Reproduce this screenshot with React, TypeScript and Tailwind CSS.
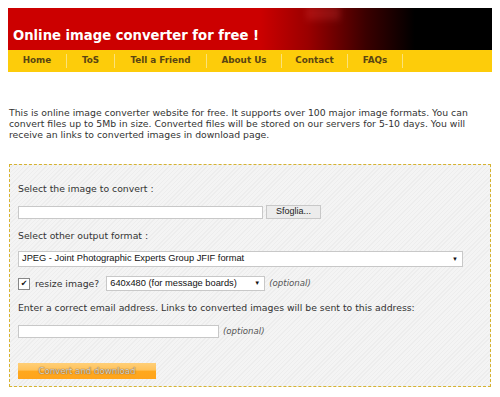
const navItems = ["Home", "ToS", "Tell a Friend", "About Us", "Contact", "FAQs"];

const navWidths = ["w-[59px]", "w-[48px]", "w-[92px]", "w-[75px]", "w-[66px]", "w-[55px]"];

function Optional() {
  return <span className="ml-[4px] text-[8.6px] italic text-[#555]">(optional)</span>;
}

export default function App() {
  return (
    <div className="h-[397px] w-[500px] bg-white pt-2 font-['DejaVu_Sans',sans-serif] text-[#222]">
      {/* header banner */}
      <header className="mx-2 w-[484px]">
        <div className="relative flex h-[42px] items-end overflow-hidden bg-[linear-gradient(90deg,#cc0000_0%,#cc0000_52%,#9a0000_62%,#3a0000_74%,#000_84%,#000_100%)] pb-[8px] pl-[5px]">
          <div className="absolute left-[298px] top-[-2px] h-[14px] w-[34px] bg-[#ff5050]/20 blur-[3px]" />
          <h1 className="relative text-[13.2px] font-bold leading-none text-white">Online image converter for free !</h1>
        </div>
        <nav className="flex h-[22px] items-center bg-[#fdcc0a]">
          {navItems.map((item, i) => (
            <div
              key={item}
              className={`flex h-[14px] items-center justify-center border-r border-[#fbe27a] text-[8.8px] font-bold text-[#5a4512] ${navWidths[i]}`}
            >
              {item}
            </div>
          ))}
        </nav>
      </header>

      <p className="ml-[9px] mt-[35px] w-[470px] text-[9.3px] leading-[11px] text-[#333]">
        This is online image converter website for free. It supports over 100 major image formats. You can convert files
        up to 5Mb in size. Converted files will be stored on our servers for 5-10 days. You will receive an links to
        converted images in download page.
      </p>

      {/* converter form */}
      <div className="ml-[9px] mt-[24px] h-[223px] w-[482px] border border-dashed border-[#d6b330] bg-[repeating-linear-gradient(135deg,#f4f4f4_0px,#f4f4f4_2px,#ededed_2px,#ededed_3px)] pl-[8px] pt-[18px] text-[9.3px] text-[#333]">
        <div className="leading-[12px]">Select the image to convert :</div>
        <div className="mt-[10px] flex items-center">
          <div className="h-[13px] w-[245px] border border-[#c8c8c8] bg-white" />
          <div className="ml-[3px] flex h-[14px] w-[55px] items-center justify-center border border-[#c8c8c8] bg-[#ececec] font-['Liberation_Sans',sans-serif] text-[9px] text-[#222]">
            Sfoglia...
          </div>
        </div>

        <div className="mt-[11px] leading-[12px]">Select other output format :</div>
        <div className="mt-[9px] flex h-[16px] w-[445px] items-center justify-between border border-[#c8c8c8] bg-white pl-[3px] pr-[4px] font-['Liberation_Sans',sans-serif] text-[9.3px] text-[#111]">
          <span>JPEG - Joint Photographic Experts Group JFIF format</span>
          <span className="text-[6px]">▼</span>
        </div>

        <div className="mt-[9px] flex items-center">
          <div className="flex h-[12px] w-[12px] items-center justify-center border border-[#888] bg-white text-[8px] leading-none text-[#111]">
            ✔
          </div>
          <span className="ml-[5px]">resize image?</span>
          <div className="ml-[7px] flex h-[15px] w-[159px] items-center justify-between border border-[#c8c8c8] bg-white pl-[3px] pr-[4px] font-['Liberation_Sans',sans-serif] text-[9.3px] text-[#111]">
            <span>640x480 (for message boards)</span>
            <span className="text-[6px]">▼</span>
          </div>
          <Optional />
        </div>

        <div className="mt-[11px] leading-[12px]">
          Enter a correct email address. Links to converted images will be sent to this address:
        </div>
        <div className="mt-[11px] flex items-center">
          <div className="h-[13px] w-[201px] border border-[#c8c8c8] bg-white" />
          <Optional />
        </div>

        <div className="mt-[25px] flex h-[16px] w-[138px] items-center justify-center bg-[linear-gradient(180deg,#ffcf78_0%,#ffc25a_45%,#ffa81e_50%,#ffa41c_100%)] text-[8.6px] text-[#e6dccb] [text-shadow:0_0_1px_#7a5a30,0_0_1px_#7a5a30]">
          Convert and download
        </div>
      </div>
    </div>
  );
}
